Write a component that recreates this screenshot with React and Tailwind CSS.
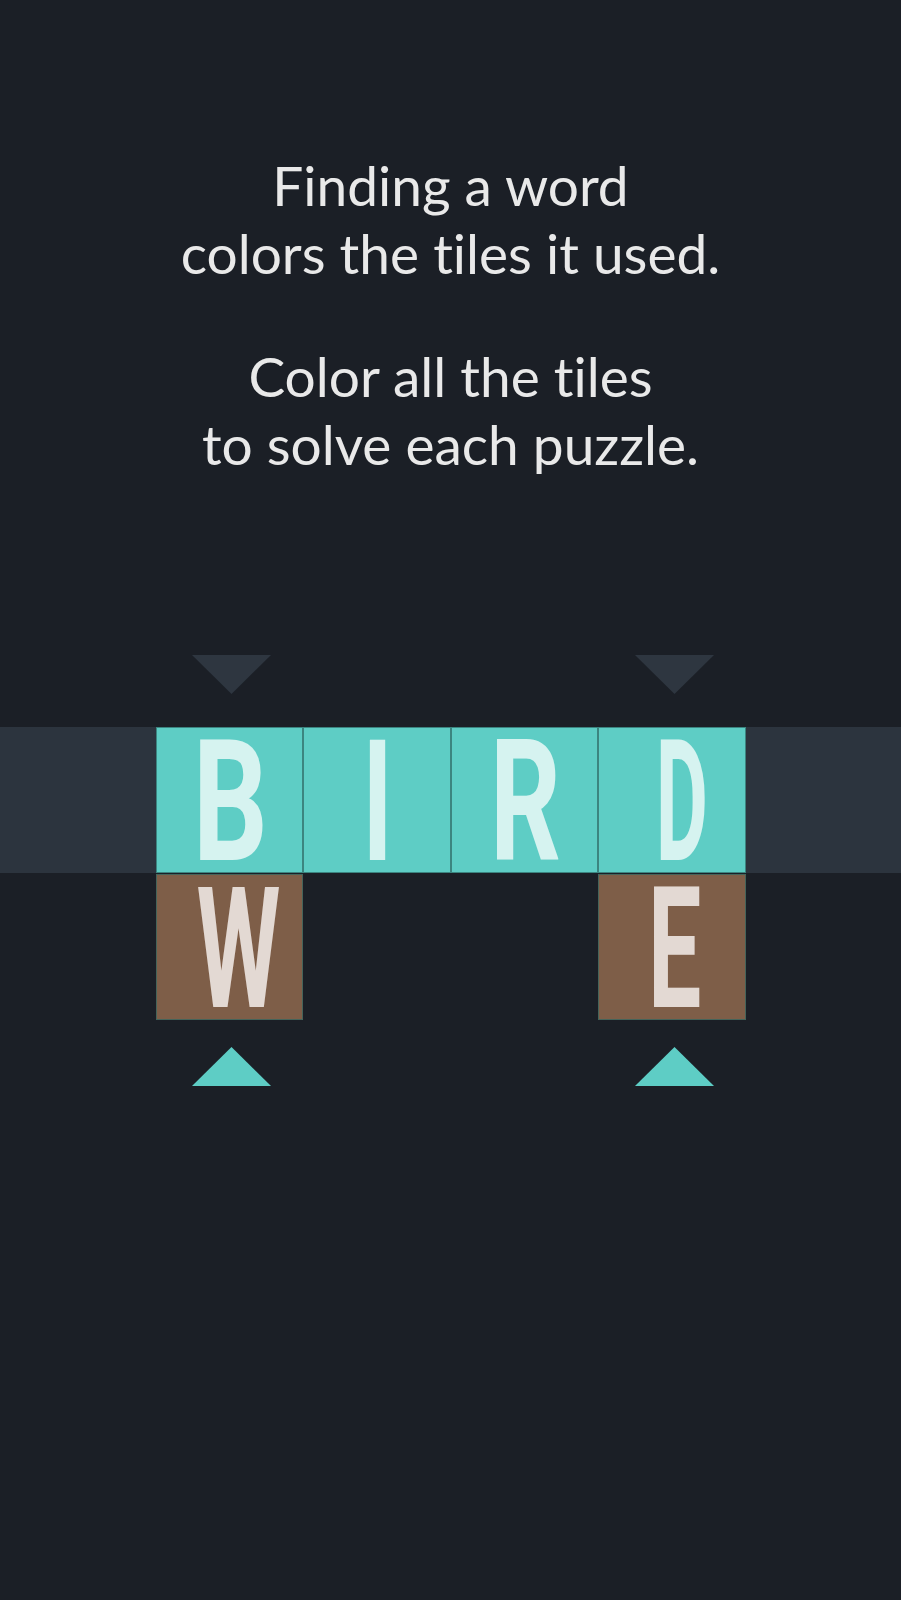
const teal = "bg-[#5ecdc5] text-[#d6f3f0]";
const brown = "bg-[#7e5e48] text-[#e3d9d3]";

// each glyph is squeezed by its own amount to get the tall condensed look,
// plus a small nudge so it sits where the game draws it
const glyph = {
  B: { squeeze: "scale-x-[0.98]", nudge: "pl-[3px]" },
  I: { squeeze: "scale-x-[0.87]", nudge: "pl-[2px]" },
  R: { squeeze: "scale-x-[0.92]", nudge: "pl-[3px]" },
  D: { squeeze: "scale-x-[0.67]", nudge: "pl-[20px]" },
  W: { squeeze: "scale-x-[0.8]", nudge: "pl-[18px]" },
  E: { squeeze: "scale-x-[0.79]", nudge: "pl-[5px]" },
};

const top = ["B", "I", "R", "D"];
const bottom = ["W", null, null, "E"];

function Tile({ letter, color }) {
  if (!letter) return <div className="h-[146px]" />;
  const g = glyph[letter];
  return (
    <div
      className={`h-[146px] pt-[6px] flex items-center justify-center border border-[#2e6663]/70 ${g.nudge} ${color}`}
    >
      <span
        className={`block font-bold leading-[0.72] text-[120px] scale-y-[1.4] ${g.squeeze}`}
        style={{ fontFamily: "Roboto, 'DejaVu Sans', sans-serif" }}
      >
        {letter}
      </span>
    </div>
  );
}

function Arrow({ up, color }) {
  return (
    <div className="flex justify-center pl-[5px]">
      <svg width="79" height="39" viewBox="0 0 79 39" className="block">
        {up ? (
          <polygon points="0,39 79,39 39.5,0" fill={color} />
        ) : (
          <polygon points="0,0 79,0 39.5,39" fill={color} />
        )}
      </svg>
    </div>
  );
}

function ArrowRow({ up, color }) {
  return (
    <div className="grid grid-cols-4 w-[590px] mx-auto">
      <Arrow up={up} color={color} />
      <div />
      <div />
      <Arrow up={up} color={color} />
    </div>
  );
}

export default function App() {
  return (
    <div className="w-full min-h-[1600px] bg-[#1b1f26] flex flex-col">
      <div
        className="pt-[151px] text-center text-[#e9e9e9] text-[55px] leading-[68px] [font-variant-ligatures:none]"
        style={{ fontFamily: "Lato, 'Open Sans', sans-serif" }}
      >
        <p>
          Finding a word
          <br />
          colors the tiles it used.
        </p>
        <p className="mt-[55px]">
          Color all the tiles
          <br />
          to solve each puzzle.
        </p>
      </div>

      <div className="mt-[177px]">
        <ArrowRow color="#2e3640" />
      </div>

      <div className="mt-[33px] w-full bg-[#2c343e]">
        <div className="grid grid-cols-4 w-[590px] mx-auto">
          {top.map((l) => (
            <Tile key={l} letter={l} color={teal} />
          ))}
        </div>
      </div>

      <div className="mt-px grid grid-cols-4 w-[590px] mx-auto">
        {bottom.map((l, i) => (
          <Tile key={i} letter={l} color={brown} />
        ))}
      </div>

      <div className="mt-[27px]">
        <ArrowRow up color="#5ecdc5" />
      </div>
    </div>
  );
}
